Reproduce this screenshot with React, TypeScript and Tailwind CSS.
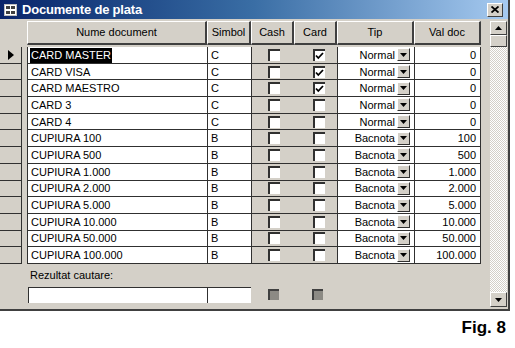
const rows = [
  { name: "CARD MASTER", sym: "C", card: true, tip: "Normal", val: "0" },
  { name: "CARD VISA", sym: "C", card: true, tip: "Normal", val: "0" },
  { name: "CARD MAESTRO", sym: "C", card: true, tip: "Normal", val: "0" },
  { name: "CARD 3", sym: "C", card: false, tip: "Normal", val: "0" },
  { name: "CARD 4", sym: "C", card: false, tip: "Normal", val: "0" },
  { name: "CUPIURA 100", sym: "B", card: false, tip: "Bacnota", val: "100" },
  { name: "CUPIURA 500", sym: "B", card: false, tip: "Bacnota", val: "500" },
  { name: "CUPIURA 1.000", sym: "B", card: false, tip: "Bacnota", val: "1.000" },
  { name: "CUPIURA 2.000", sym: "B", card: false, tip: "Bacnota", val: "2.000" },
  { name: "CUPIURA 5.000", sym: "B", card: false, tip: "Bacnota", val: "5.000" },
  { name: "CUPIURA 10.000", sym: "B", card: false, tip: "Bacnota", val: "10.000" },
  { name: "CUPIURA 50.000", sym: "B", card: false, tip: "Bacnota", val: "50.000" },
  { name: "CUPIURA 100.000", sym: "B", card: false, tip: "Bacnota", val: "100.000" },
];

function Check({ on }: { on: boolean }) {
  return (
    <div className="w-[12px] h-[12px] bg-white border-t-2 border-l-2 border-t-[#303030] border-l-[#303030] flex items-center justify-center">
      {on && (
        <svg width="9" height="8" viewBox="0 0 9 8">
          <path d="M1 3.5 L3.3 6 L8 1" stroke="#000" strokeWidth="1.8" fill="none" />
        </svg>
      )}
    </div>
  );
}

function Arrow({ up }: { up?: boolean }) {
  return (
    <svg width="7" height="4" viewBox="0 0 7 4">
      <path d={up ? "M0 4 L3.5 0 L7 4 Z" : "M0 0 L7 0 L3.5 4 Z"} fill="#000" />
    </svg>
  );
}

function HeaderCell({ w, label }: { w: string; label: string }) {
  return (
    <div
      className={`${w} h-full flex items-center justify-center bg-[#d4d0c8] border-t border-l border-t-white border-l-white border-r-2 border-b-2 border-r-[#404040] border-b-[#404040]`}
    >
      {label}
    </div>
  );
}

export default function App() {
  return (
    <div className="w-[515px] h-[348px] bg-white font-['Liberation_Sans',Arial,sans-serif] text-[11px] text-black leading-none">
      <div className="w-[510px] h-[311px] bg-[#d4d0c8] border-r-2 border-b-2 border-r-[#404040] border-b-[#404040] flex flex-col">
        {/* title bar */}
        <div className="h-[19px] shrink-0 flex items-center bg-gradient-to-r from-[#0a246a] via-[#3a6ea5] to-[#a6caf0] pl-[4px] pr-[5px]">
          <svg width="13" height="12" viewBox="0 0 13 12" className="shrink-0">
            <rect x="0.5" y="0.5" width="12" height="11" fill="#fff" stroke="#c0c0c0" />
            <rect x="2" y="2" width="4" height="3" fill="#404040" />
            <rect x="7" y="2" width="4" height="3" fill="#404040" />
            <rect x="2" y="7" width="4" height="3" fill="#404040" />
            <rect x="7" y="7" width="4" height="3" fill="#404040" />
          </svg>
          <span className="ml-[5px] text-white font-bold text-[13px] tracking-[-0.2px]">Documente de plata</span>
          <div className="ml-auto w-[16px] h-[14px] bg-[#d4d0c8] border-t border-l border-t-white border-l-white border-r border-b border-r-[#404040] border-b-[#404040] flex items-center justify-center">
            <svg width="8" height="7" viewBox="0 0 8 7">
              <path d="M0.5 0.5 L7.5 6.5 M7.5 0.5 L0.5 6.5" stroke="#000" strokeWidth="1.8" />
            </svg>
          </div>
        </div>

        <div className="flex flex-1 pt-[2px]">
          {/* datasheet */}
          <div className="w-[488px] flex flex-col">
            <div className="flex h-[24px] pl-[27px]">
              <HeaderCell w="w-[180px]" label="Nume document" />
              <HeaderCell w="w-[44px]" label="Simbol" />
              <HeaderCell w="w-[43px]" label="Cash" />
              <HeaderCell w="w-[43px]" label="Card" />
              <HeaderCell w="w-[77px]" label="Tip" />
              <HeaderCell w="w-[67px]" label="Val doc" />
            </div>
            <div className="flex flex-col mt-[2px]">
              {rows.map((r, i) => (
                <div key={r.name} className="flex h-[16.7px]">
                  <div className="w-[22px] h-full border-b border-r border-b-[#303030] border-r-[#303030] flex items-center justify-center">
                    {i === 0 && (
                      <svg width="6" height="10" viewBox="0 0 6 10">
                        <path d="M0 0 L6 5 L0 10 Z" fill="#000" />
                      </svg>
                    )}
                  </div>
                  <div className="w-[5px]" />
                  <div className="w-[180px] h-full bg-white border-l border-b border-[#303030] flex items-center pl-[2px] pt-[1px]">
                    <span className={i === 0 ? "bg-black text-white px-[1px] py-[2px]" : "px-[1px]"}>{r.name}</span>
                  </div>
                  <div className="w-[44px] h-full bg-white border-l border-b border-[#303030] flex items-center pl-[3px] pt-[1px]">
                    {r.sym}
                  </div>
                  <div className="w-[43px] h-full border-l border-b border-[#303030] flex items-center justify-center pl-[2px]">
                    <Check on={false} />
                  </div>
                  <div className="w-[43px] h-full border-b border-[#303030] flex items-center justify-center pl-[6px]">
                    <Check on={r.card} />
                  </div>
                  <div className="w-[77px] h-full bg-white border-l border-b border-[#303030] flex items-center justify-end pr-[4px]">
                    <span className="pr-[2px] pt-[1px]">{r.tip}</span>
                    <div className="w-[13px] h-[13px] bg-[#d4d0c8] border-t border-l border-t-white border-l-white border-r border-b border-r-[#303030] border-b-[#303030] flex items-center justify-center">
                      <Arrow />
                    </div>
                  </div>
                  <div className="w-[67px] h-full bg-white border-l border-r border-b border-[#303030] flex items-center justify-end pr-[4px] pt-[1px]">
                    {r.val}
                  </div>
                </div>
              ))}
            </div>

            <div className="pl-[30px] pt-[6px]">Rezultat cautare:</div>
            <div className="flex items-center pl-[28px] mt-[6px]">
              <div className="w-[179px] h-[16px] bg-white border-t border-l border-t-[#303030] border-l-[#303030]" />
              <div className="w-[44px] h-[16px] bg-white border-t border-l border-t-[#303030] border-l-[#303030]" />
              <div className="w-[43px] flex justify-center pl-[2px]">
                <div className="w-[11px] h-[11px] bg-[#8c8a84] border-t-2 border-l-2 border-t-[#404040] border-l-[#404040]" />
              </div>
              <div className="w-[43px] flex justify-center pl-[4px]">
                <div className="w-[11px] h-[11px] bg-[#8c8a84] border-t-2 border-l-2 border-t-[#404040] border-l-[#404040]" />
              </div>
            </div>
          </div>

          {/* scrollbar */}
          <div className="w-[17px] ml-[2px] mb-[2px] flex flex-col bg-[repeating-conic-gradient(#d4d0c8_0_25%,#ffffff_0_50%)] bg-[length:2px_2px]">
            <div className="h-[14px] bg-[#d4d0c8] border-t border-l border-t-white border-l-white border-r border-b border-r-[#404040] border-b-[#404040] flex items-center justify-center">
              <Arrow up />
            </div>
            <div className="h-[12px] bg-[#d4d0c8] border-t border-l border-t-white border-l-white border-r border-b border-r-[#404040] border-b-[#404040]" />
            <div className="flex-1" />
            <div className="h-[15px] bg-[#d4d0c8] border-t border-l border-t-white border-l-white border-r border-b border-r-[#404040] border-b-[#404040] flex items-center justify-center">
              <Arrow />
            </div>
          </div>
        </div>
      </div>
      <div className="w-[506px] flex justify-end pt-[8px]">
        <span className="font-bold text-[17px]">Fig. 8</span>
      </div>
    </div>
  );
}
